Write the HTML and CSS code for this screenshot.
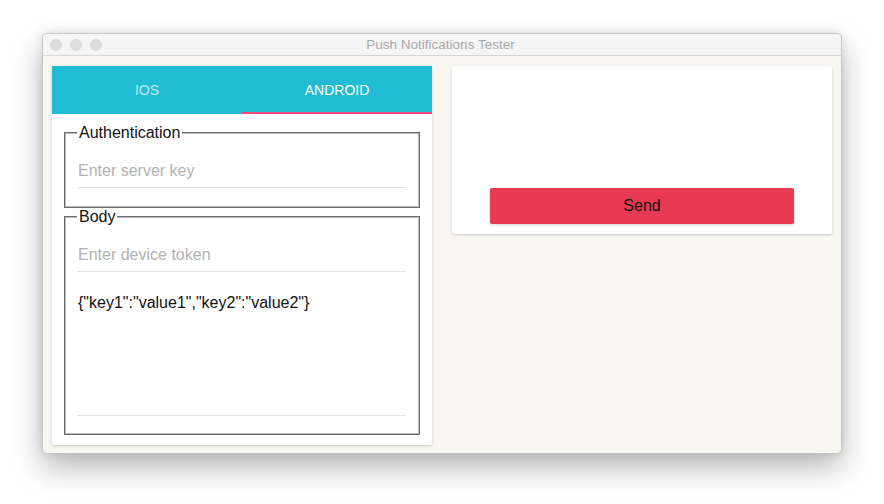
FILE: index.html
```html
<!DOCTYPE html>
<html>
<head>
<meta charset="utf-8">
<link rel="stylesheet" href="styles.css">
</head>
<body>
<div class="window">
  <div class="titlebar">
    <div class="lights"><span class="light"></span><span class="light"></span><span class="light"></span></div>
    <div class="title">Push Notifications Tester</div>
  </div>
  <div class="content">
    <div class="card left">
      <div class="tabs">
        <div class="tab">IOS</div>
        <div class="tab active">ANDROID</div>
      </div>
      <div class="form">
        <fieldset class="group">
          <legend>Authentication</legend>
          <input class="field" type="text" placeholder="Enter server key">
        </fieldset>
        <fieldset class="group body-group">
          <legend>Body</legend>
          <input class="field" type="text" placeholder="Enter device token">
          <textarea class="area">{"key1":"value1","key2":"value2"}</textarea>
        </fieldset>
      </div>
    </div>
    <div class="card right">
      <button class="send">Send</button>
    </div>
  </div>
</div>
</body>
</html>
```
FILE: styles.css
```css
html, body {
  margin: 0;
  background: #ffffff;
}
body {
  padding: 33px 0 0 42px;
  height: 504px;
  box-sizing: border-box;
  font-family: "Liberation Sans", Arial, sans-serif;
}
.window {
  box-sizing: border-box;
  width: 800px;
  height: 421px;
  border: 1px solid #c6c6c6;
  border-radius: 5px;
  overflow: hidden;
  background: #f7f6f0;
  box-shadow: 0 14px 30px rgba(0, 0, 0, 0.28), 0 0 10px rgba(0, 0, 0, 0.1);
  display: flex;
  flex-direction: column;
}
.titlebar {
  flex: 0 0 auto;
  height: 21px;
  border-bottom: 1px solid #d6d6d6;
  background: #f5f5f5;
  display: flex;
  align-items: center;
}
.lights {
  display: flex;
  gap: 8px;
  padding-left: 7px;
}
.light {
  width: 12px;
  height: 12px;
  border-radius: 50%;
  background: #dddddd;
}
.title {
  flex: 1;
  text-align: center;
  font-size: 13.5px;
  color: #a9a9a9;
  margin-right: 62px;
}
.content {
  flex: 1 1 auto;
  min-height: 0;
  display: flex;
  align-items: flex-start;
  gap: 20px;
  padding: 10px 9px;
}
.card {
  width: 380px;
  flex: 0 0 380px;
  background: #ffffff;
  border-radius: 2px;
  box-shadow: 0 1px 3px rgba(0, 0, 0, 0.13), 0 1px 2px rgba(0, 0, 0, 0.06);
}
.tabs {
  display: flex;
  height: 48px;
  background: #21bcd3;
}
.tab {
  flex: 1;
  display: flex;
  align-items: center;
  justify-content: center;
  font-size: 14px;
  color: rgba(255, 255, 255, 0.72);
  box-sizing: border-box;
}
.tab.active {
  color: #ffffff;
  border-bottom: 2px solid #f2457c;
  padding-top: 2px;
}
.form {
  padding: 10px 12px 10px;
}
.group {
  margin: 0;
  border: 1px solid #6c6c6c;
  box-shadow: inset 0 0 0 1px #b9b9b9;
  padding: 0 13px 19px 13px;
}
.group legend {
  padding: 0 2px;
  margin-left: -1px;
  font-size: 16px;
  line-height: 17px;
  color: #111111;
  background: #ffffff;
}
.body-group {
  margin-top: 0;
  padding-bottom: 18px;
}
.field {
  display: block;
  box-sizing: border-box;
  width: 100%;
  height: 33px;
  margin: 14px 0 0;
  padding: 0;
  border: none;
  border-bottom: 1px solid #e2e2e2;
  outline: none;
  background: transparent;
  font-family: "Liberation Sans", Arial, sans-serif;
  font-size: 16px;
  color: #111111;
}
.field::placeholder {
  color: #b2b2b2;
}
.area {
  display: block;
  box-sizing: border-box;
  width: 100%;
  height: 144px;
  margin: 0;
  padding: 22px 0 0;
  border: none;
  border-bottom: 1px solid #e2e2e2;
  outline: none;
  resize: none;
  background: transparent;
  font-family: "Liberation Sans", Arial, sans-serif;
  font-size: 16px;
  line-height: 18px;
  color: #111111;
}
.right {
  display: flex;
  justify-content: center;
  padding: 122px 0 10px;
}
.send {
  width: 304px;
  height: 36px;
  border: none;
  border-radius: 2px;
  background: #e83a52;
  color: #111111;
  font-family: "Liberation Sans", Arial, sans-serif;
  font-size: 16px;
  box-shadow: 0 1px 3px rgba(0, 0, 0, 0.18);
}
```
